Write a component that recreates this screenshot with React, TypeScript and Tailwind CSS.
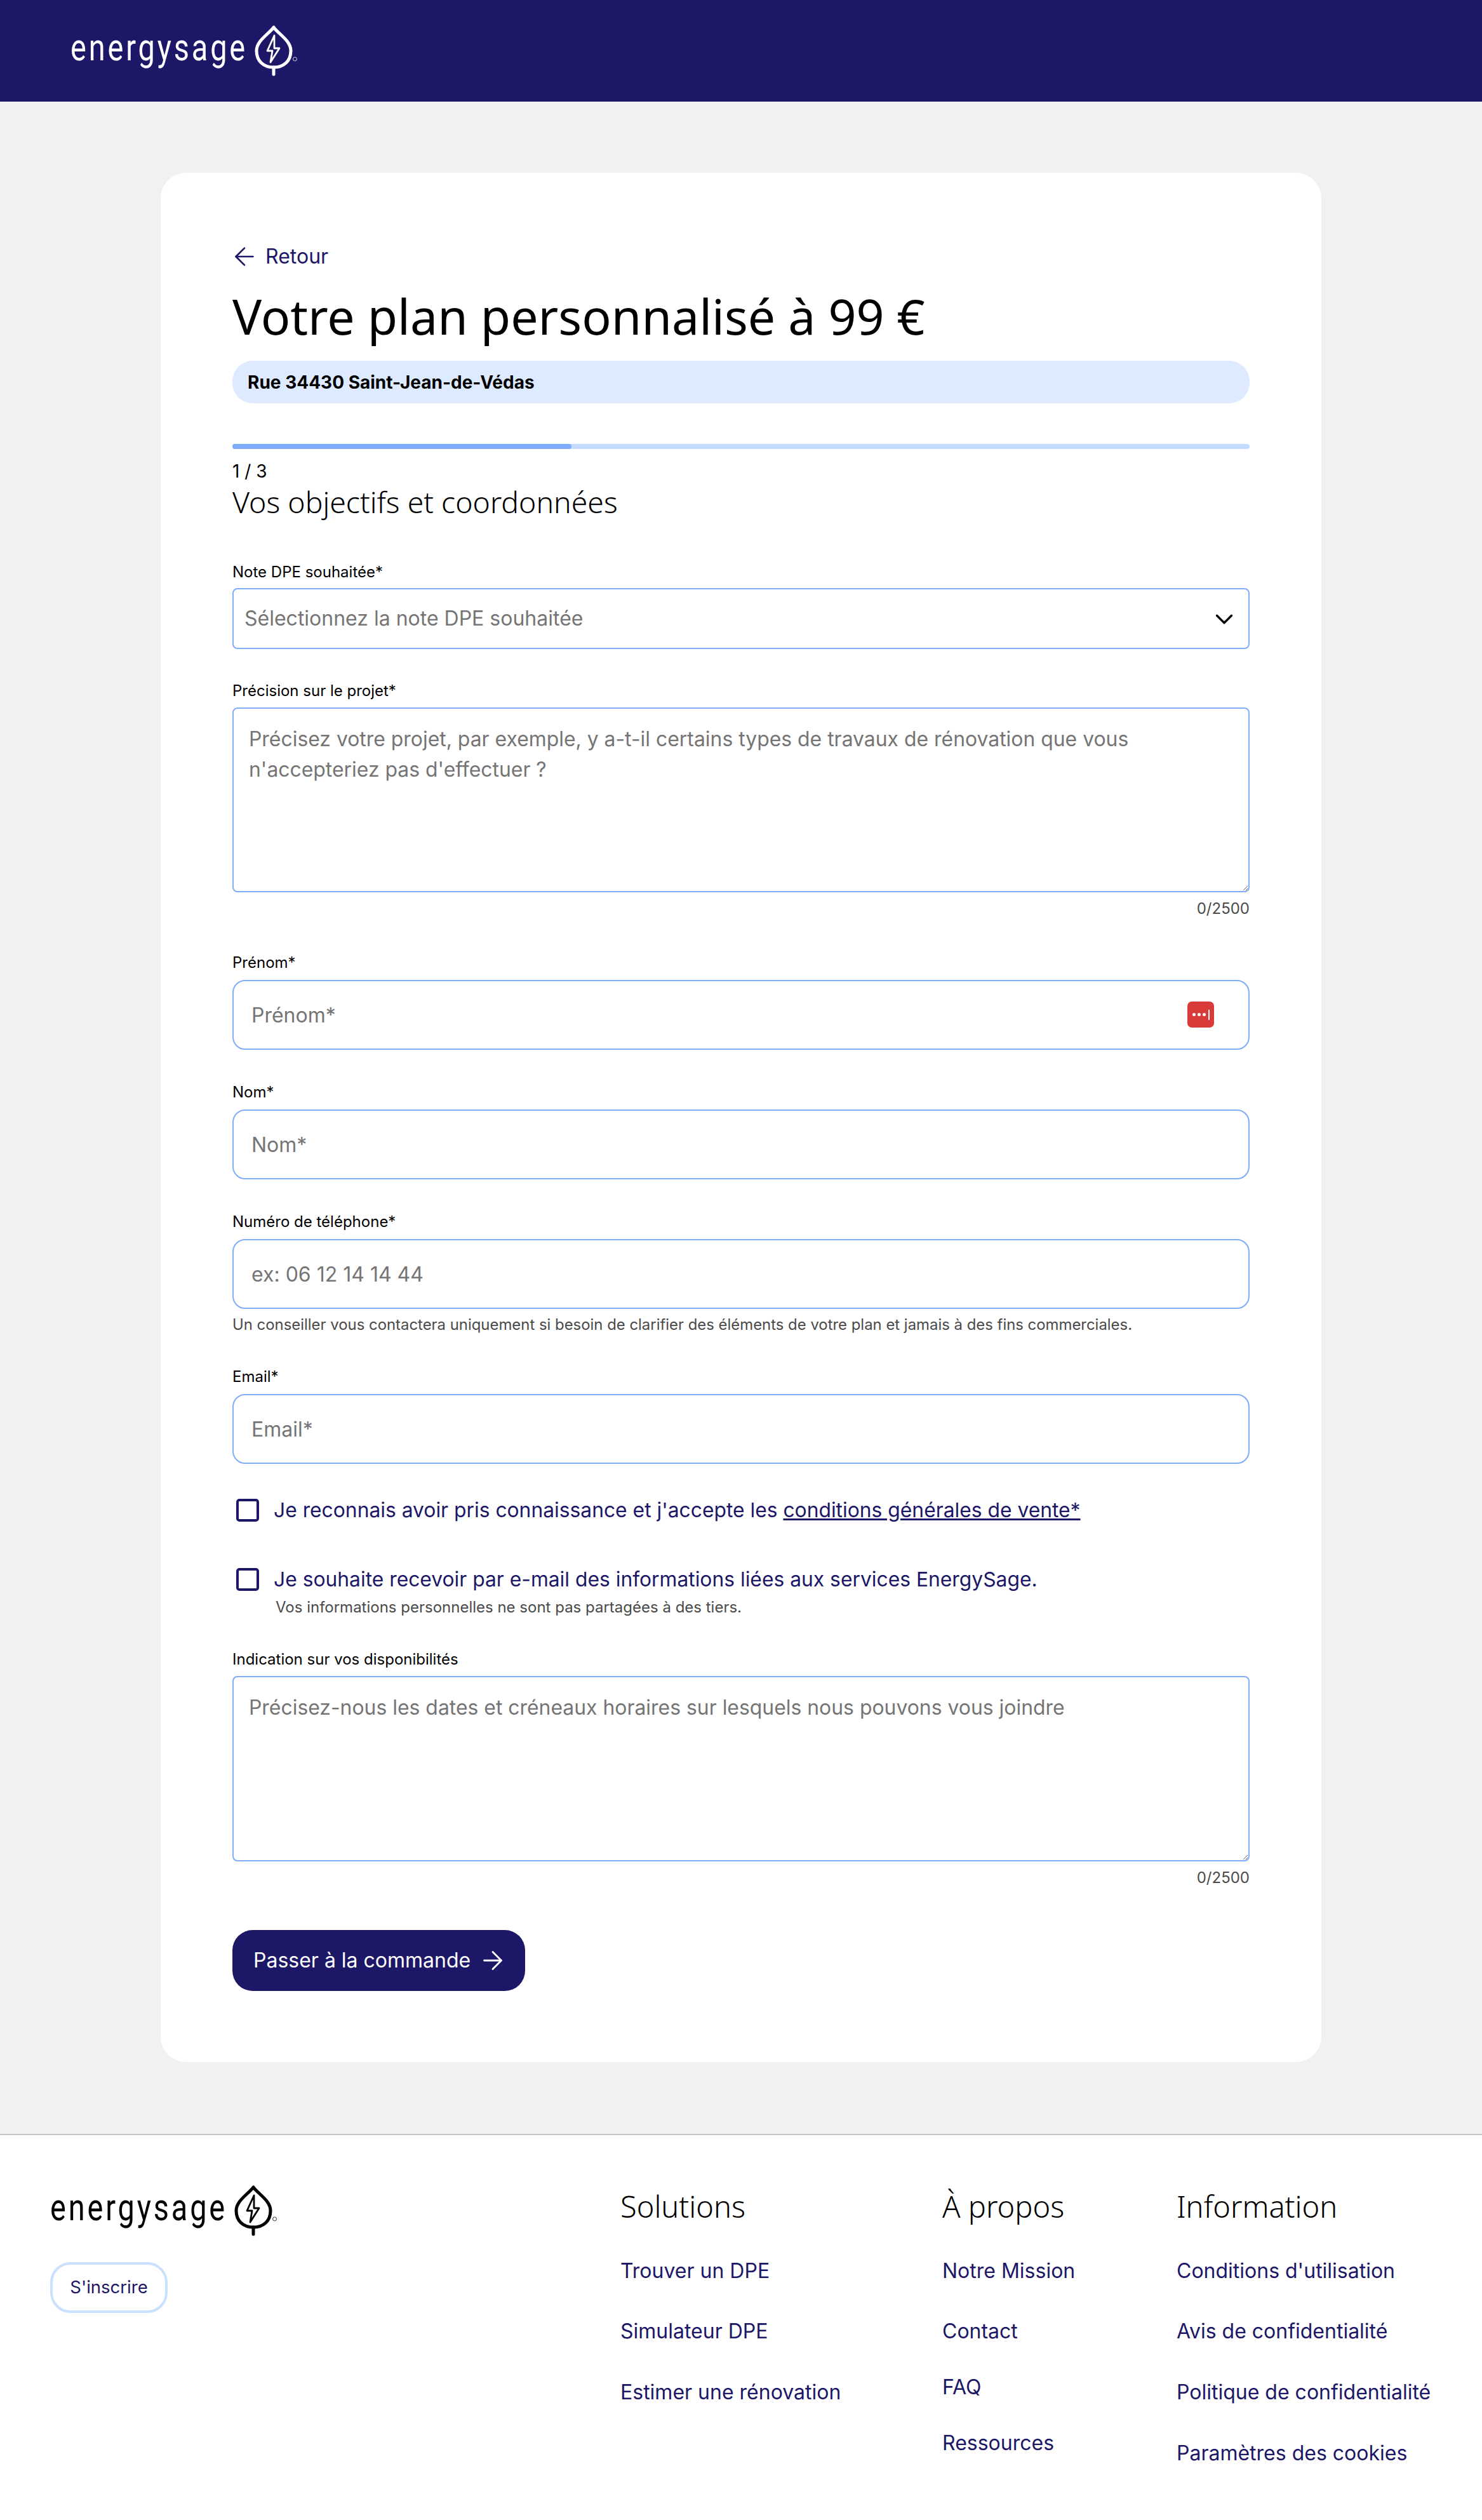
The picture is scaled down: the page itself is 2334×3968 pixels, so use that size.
import { ArrowLeft, ArrowRight, ChevronDown } from 'lucide-react'

const inter = "font-['Inter',sans-serif]"

const footerColumns = [
  {
    title: 'Solutions',
    width: 'w-[507px]',
    links: [
      { label: 'Trouver un DPE', gap: 'mt-[58px]' },
      { label: 'Simulateur DPE', gap: 'mt-[55px]' },
      { label: 'Estimer une rénovation', gap: 'mt-[56px]' },
    ],
  },
  {
    title: 'À propos',
    width: 'w-[369px]',
    links: [
      { label: 'Notre Mission', gap: 'mt-[58px]' },
      { label: 'Contact', gap: 'mt-[55px]' },
      { label: 'FAQ', gap: 'mt-[48px]' },
      { label: 'Ressources', gap: 'mt-[48px]' },
    ],
  },
  {
    title: 'Information',
    width: 'w-[440px]',
    links: [
      { label: "Conditions d'utilisation", gap: 'mt-[58px]' },
      { label: 'Avis de confidentialité', gap: 'mt-[55px]' },
      { label: 'Politique de confidentialité', gap: 'mt-[56px]' },
      { label: 'Paramètres des cookies', gap: 'mt-[56px]' },
    ],
  },
]

function Logo({ dark }: { dark?: boolean }) {
  return (
    <div className={dark ? 'flex items-start text-black' : 'flex items-start text-white'}>
      <span className="block w-[291px] origin-left scale-x-[0.78] font-['Roboto',sans-serif] text-[60px] leading-[70px] font-normal tracking-[5px]">
        energysage
      </span>
      <svg width="68" height="80" viewBox="0 0 68 80" fill="none" stroke="currentColor" className="-ml-[1px]">
        <path d="M30 3 C22 14 3 24 3 40 C3 56 14 66 30 66 C46 66 57 56 57 40 C57 24 38 14 30 3 Z" strokeWidth="5" strokeLinejoin="round" />
        <path d="M30 66 V77" strokeWidth="5" strokeLinecap="round" />
        <path d="M31 16 L20 40 L28 40 L25 58 L39 36 L31 36 Z" strokeWidth="2.8" strokeLinejoin="round" />
        <circle cx="63.5" cy="53" r="3" strokeWidth="0.8" />
      </svg>
    </div>
  )
}

function Label({ children, className }: { children: string; className: string }) {
  return <label className={`block text-[24px] leading-[32px] text-black ${className}`}>{children}</label>
}

function Area({ placeholder, height }: { placeholder: string; height: string }) {
  return (
    <textarea
      placeholder={placeholder}
      className={`mt-[10px] block w-full rounded-[8px] border-2 border-[#7fadfa] bg-white px-[24px] pt-[24px] text-[31.9px] leading-[48px] outline-none placeholder:text-[#757575] ${height}`}
    />
  )
}

function Field({ placeholder, children }: { placeholder: string; children?: React.ReactNode }) {
  return (
    <div className="relative mt-[11px]">
      <input
        placeholder={placeholder}
        className="block h-[110px] w-full rounded-[20px] border-2 border-[#7fadfa] bg-white px-[28px] text-[32px] outline-none placeholder:text-[#757575]"
      />
      {children}
    </div>
  )
}

function Counter() {
  return <p className="mt-[10px] text-right text-[24px] leading-[32px] text-[#4a4a4a]">0/2500</p>
}

export default function App() {
  return (
    <div className={`min-h-[3968px] bg-white ${inter}`}>
      <header className="flex h-[160px] items-start bg-[#1c1766] pt-[40px] pl-[111px]">
        <Logo />
      </header>

      <main className="bg-[#f0f2f1] pt-[112px] pb-[113px]">
        <div className="mx-auto w-[1828px] rounded-[40px] bg-white px-[113px] pt-[112px] pb-[112px]">
          <a className="flex h-[40px] items-center gap-[10px] text-[32px] text-[#1c1766]">
            <ArrowLeft size={46} strokeWidth={1.4} className="-ml-[4px]" />
            Retour
          </a>
          <h1 className="mt-[30px] font-['Noto_Sans',sans-serif] text-[77px] leading-[88px] text-black">
            Votre plan personnalisé à 99 €
          </h1>
          <div className="mt-[26px] flex h-[67px] items-center rounded-[32px] bg-[#deeaff] pl-[24px] text-[28px] font-bold text-black">
            Rue 34430 Saint-Jean-de-Védas
          </div>
          <div className="mt-[64px] h-[8px] rounded-full bg-[#c3dcff]">
            <div className="h-full w-1/3 rounded-full bg-[#7fadfa]" />
          </div>
          <p className="mt-[19px] text-[28px] leading-[32px] text-black">1 / 3</p>
          <h2 className="mt-[4px] font-['Noto_Sans',sans-serif] text-[46.4px] leading-[56px] font-light text-black">
            Vos objectifs et coordonnées
          </h2>

          <Label className="mt-[67px]">Note DPE souhaitée*</Label>
          <div className="relative mt-[9px]">
            <select className="block h-[96px] w-full appearance-none rounded-[8px] border-2 border-[#7fadfa] bg-white pl-[17px] text-[32px] text-[#757575] outline-none">
              <option>Sélectionnez la note DPE souhaitée</option>
            </select>
            <ChevronDown size={46} strokeWidth={1.7} className="pointer-events-none absolute top-[26px] right-[17px] text-black" />
          </div>

          <Label className="mt-[50px]">Précision sur le projet*</Label>
          <Area height="h-[291px]" placeholder="Précisez votre projet, par exemple, y a-t-il certains types de travaux de rénovation que vous n'accepteriez pas d'effectuer ?" />
          <Counter />

          <Label className="mt-[53px]">Prénom*</Label>
          <Field placeholder="Prénom*">
            <span className="absolute top-[34px] right-[56px] flex h-[41px] w-[42px] items-center justify-center gap-[3px] rounded-[7px] bg-[#d93b3b]">
              <i className="size-[5px] rounded-full bg-white" />
              <i className="size-[5px] rounded-full bg-white" />
              <i className="size-[5px] rounded-full bg-white" />
              <i className="ml-[1px] h-[16px] w-[2px] bg-white" />
            </span>
          </Field>

          <Label className="mt-[51px]">Nom*</Label>
          <Field placeholder="Nom*" />

          <Label className="mt-[51px]">Numéro de téléphone*</Label>
          <Field placeholder="ex: 06 12 14 14 44" />
          <p className="mt-[9px] text-[23.9px] leading-[32px] text-[#4a4a4a]">
            Un conseiller vous contactera uniquement si besoin de clarifier des éléments de votre plan et jamais à des fins commerciales.
          </p>

          <Label className="mt-[50px]">Email*</Label>
          <Field placeholder="Email*" />

          <div className="mt-[55px] flex h-[36px] items-center pl-[6px] text-[31.8px] text-[#1c1766]">
            <span className="size-[36px] rounded-[5px] border-[4px] border-[#1c1766]" />
            <span className="ml-[23px]">
              Je reconnais avoir pris connaissance et j'accepte les <u>conditions générales de vente*</u>
            </span>
          </div>
          <div className="mt-[73px] flex h-[36px] items-center pl-[6px] text-[31.8px] text-[#1c1766]">
            <span className="size-[36px] rounded-[5px] border-[4px] border-[#1c1766]" />
            <span className="ml-[23px]">Je souhaite recevoir par e-mail des informations liées aux services EnergySage.</span>
          </div>
          <p className="mt-[10px] pl-[68px] text-[24px] leading-[32px] text-[#4a4a4a]">
            Vos informations personnelles ne sont pas partagées à des tiers.
          </p>

          <Label className="mt-[50px]">Indication sur vos disponibilités</Label>
          <Area height="h-[292px]" placeholder="Précisez-nous les dates et créneaux horaires sur lesquels nous pouvons vous joindre" />
          <Counter />

          <button className="mt-[66px] flex h-[96px] w-[461px] items-center gap-[12px] rounded-[32px] bg-[#1c1766] pl-[33px] text-[32px] text-white">
            Passer à la commande
            <ArrowRight size={46} strokeWidth={1.5} />
          </button>
        </div>
      </main>

      <footer className="flex border-t-2 border-[#c4c6c6] bg-white pt-[79px] pl-[79px]">
        <div className="w-[898px]">
          <div className="h-[80px]">
            <Logo dark />
          </div>
          <button className="mt-[41px] block h-[80px] w-[185px] rounded-[32px] border-[4px] border-[#c9e0ff] text-[27.5px] text-[#1c1766]">
            S'inscrire
          </button>
        </div>
        {footerColumns.map((column) => (
          <div key={column.title} className={column.width}>
            <h3 className="mt-[9px] font-['Noto_Sans',sans-serif] text-[47px] leading-[48px] font-light text-black">{column.title}</h3>
            {column.links.map((link) => (
              <a key={link.label} className={`block text-[32px] leading-[40px] text-[#1c1766] ${link.gap}`}>
                {link.label}
              </a>
            ))}
          </div>
        ))}
      </footer>
    </div>
  )
}
